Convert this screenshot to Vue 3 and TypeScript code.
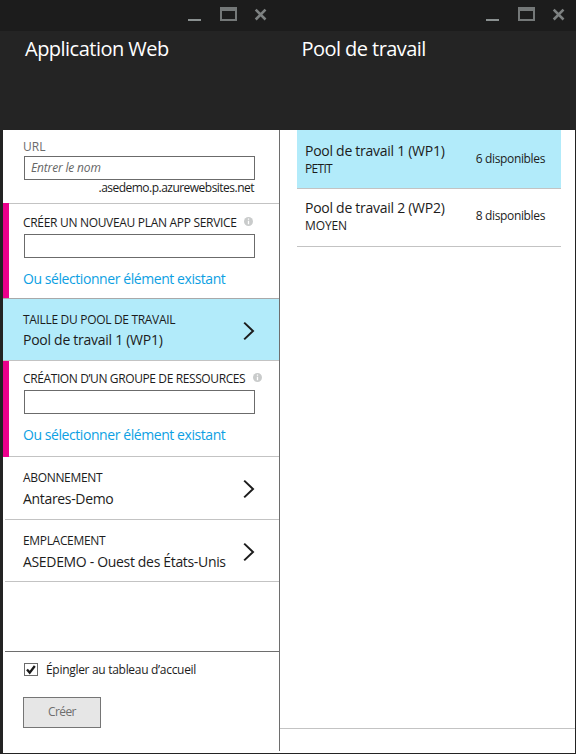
<script setup lang="ts">
import { ref } from 'vue'

interface Pool {
  id: number
  name: string
  size: string
  available: number
}

const pools: Pool[] = [
  { id: 1, name: 'Pool de travail 1 (WP1)', size: 'PETIT', available: 6 },
  { id: 2, name: 'Pool de travail 2 (WP2)', size: 'MOYEN', available: 8 },
]

const blades = [
  { id: 'app', title: 'Application Web' },
  { id: 'pool', title: 'Pool de travail' },
]

const selectedPool = ref(1)
const siteName = ref('')
const planName = ref('')
const groupName = ref('')
const pinned = ref(true)
</script>

<template>
  <div class="window">
    <header class="top">
      <div v-for="b in blades" :key="b.id" class="head" :class="b.id">
        <div class="controls">
          <svg width="79" height="15" viewBox="0 0 79 15">
            <rect x="0" y="12" width="13" height="2" fill="#8a9090" />
            <path d="M32 0h17v14H32zM34 4v8h13V4z" fill="#747878" fill-rule="evenodd" />
            <path d="M67.7 2.7l9.8 9.8M77.5 2.7l-9.8 9.8" stroke="#7d8181" stroke-width="2.6" fill="none" />
          </svg>
        </div>
        <h1>{{ b.title }}</h1>
      </div>
    </header>

    <div class="body">
      <main class="form">
        <section class="row url">
          <label class="cap">URL</label>
          <input v-model="siteName" class="field" type="text" placeholder="Entrer le nom" />
          <div class="suffix">.asedemo.p.azurewebsites.net</div>
        </section>

        <section class="row choice first">
          <label class="cap plan">
            <span>CRÉER UN NOUVEAU PLAN APP SERVICE</span>
            <svg class="info" width="9" height="9" viewBox="0 0 9 9">
              <circle cx="4.5" cy="4.5" r="4.5" fill="#c9cbcb" />
              <path d="M4.5 1.6v1.2M4.5 3.8v3.4" stroke="#fff" stroke-width="1.3" />
            </svg>
          </label>
          <input v-model="planName" class="field" type="text" />
          <a class="link">Ou sélectionner élément existant</a>
        </section>

        <section class="row nav active">
          <div>
            <div class="cap size">TAILLE DU POOL DE TRAVAIL</div>
            <div class="value wp">{{ pools[selectedPool - 1].name }}</div>
          </div>
          <svg class="chev" width="12" height="20" viewBox="0 0 12 20"><path d="M1.2 1.6L10 10l-8.8 8.4" /></svg>
        </section>

        <section class="row choice second">
          <label class="cap group">
            <span>CRÉATION D’UN GROUPE DE RESSOURCES</span>
            <svg class="info" width="9" height="9" viewBox="0 0 9 9">
              <circle cx="4.5" cy="4.5" r="4.5" fill="#c9cbcb" />
              <path d="M4.5 1.6v1.2M4.5 3.8v3.4" stroke="#fff" stroke-width="1.3" />
            </svg>
          </label>
          <input v-model="groupName" class="field" type="text" />
          <a class="link">Ou sélectionner élément existant</a>
        </section>

        <section class="row nav sub">
          <div>
            <div class="cap abo">ABONNEMENT</div>
            <div class="value">Antares-Demo</div>
          </div>
          <svg class="chev" width="12" height="20" viewBox="0 0 12 20"><path d="M1.2 1.6L10 10l-8.8 8.4" /></svg>
        </section>

        <section class="row nav loc">
          <div>
            <div class="cap abo">EMPLACEMENT</div>
            <div class="value">ASEDEMO - Ouest des États-Unis</div>
          </div>
          <svg class="chev" width="12" height="20" viewBox="0 0 12 20"><path d="M1.2 1.6L10 10l-8.8 8.4" /></svg>
        </section>

        <footer class="foot">
          <label class="pin">
            <input v-model="pinned" class="hidden" type="checkbox" />
            <span class="box">
              <svg v-if="pinned" width="12" height="11" viewBox="0 0 12 11">
                <path d="M2 5.6l2.7 3L9.8 2" fill="none" stroke="#1a1a1a" stroke-width="2.3" />
              </svg>
            </span>
            <span>Épingler au tableau d’accueil</span>
          </label>
          <button class="create" type="button">Créer</button>
        </footer>
      </main>

      <div class="divider"></div>

      <aside class="picker">
        <ul>
          <li
            v-for="p in pools"
            :key="p.id"
            :class="{ active: p.id === selectedPool }"
            @click="selectedPool = p.id"
          >
            <div>
              <div class="value wp">{{ p.name }}</div>
              <div class="tier" :class="p.size.toLowerCase()">{{ p.size }}</div>
            </div>
            <span class="count">{{ p.available }} disponibles</span>
          </li>
        </ul>
        <div class="bar"></div>
      </aside>
    </div>
  </div>
</template>

<style>
body {
  background: #232323;
}
</style>

<style scoped>
* {
  box-sizing: border-box;
}
.window {
  width: 576px;
  height: 754px;
  display: flex;
  flex-direction: column;
  background: #232323;
  color: #1c1c1c;
  font-family: 'Open Sans', 'Noto Sans', sans-serif;
  white-space: nowrap;
  overflow: hidden;
}
.top {
  display: grid;
  grid-template-columns: 278px 298px;
  height: 130px;
  background: #242424;
}
.controls {
  height: 31px;
  padding: 7px 11px 0 0;
  display: flex;
  justify-content: flex-end;
  background: #1c1c1c;
}
h1 {
  margin: 5px 0 0 25px;
  color: #fff;
  font-size: 20px;
  font-weight: 400;
  line-height: 26px;
  letter-spacing: -0.52px;
}
.pool h1 {
  margin-left: 23.5px;
  letter-spacing: -0.55px;
}
.body {
  display: flex;
  height: 623px;
  margin: 0 1px 0 3px;
  background: #fff;
}
.form {
  width: 276px;
  display: flex;
  flex-direction: column;
}
.divider {
  width: 1px;
  height: 621px;
  background: #6e6e6e;
}
.row {
  padding-left: 20px;
  border-bottom: 1px solid #c3c3c3;
}
.cap {
  display: block;
  font-size: 12px;
  line-height: 18px;
  letter-spacing: -0.32px;
}
.field {
  display: block;
  width: 231px;
  height: 24px;
  margin: 0 0 0 1px;
  padding: 0 6px 2px;
  border: 1px solid #6b6b6b;
  border-radius: 0;
  outline: none;
  background: #fff;
  font: 12px 'Open Sans', 'Noto Sans', sans-serif;
  letter-spacing: -0.17px;
}
.field::placeholder {
  color: #666;
  font-style: italic;
  opacity: 1;
}
.url {
  height: 73px;
  padding-top: 8px;
  border-bottom: 0;
}
.url .cap {
  color: #6b6b6b;
  letter-spacing: 0;
}
.suffix {
  width: 231px;
  text-align: right;
  font-size: 12px;
  line-height: 16px;
  letter-spacing: -0.52px;
}
.choice {
  display: flex;
  flex-direction: column;
  border-bottom: 0;
}
.first {
  height: 96px;
  padding-top: 9px;
  background:
    linear-gradient(#a9a9a9, #a9a9a9) bottom / 100% 1px no-repeat,
    linear-gradient(#ec008c, #ec008c) left / 6px 100% no-repeat,
    linear-gradient(#c3c3c3, #c3c3c3) top / 100% 1px no-repeat;
}
.second {
  height: 96px;
  padding-top: 7px;
  background:
    linear-gradient(#ec008c, #ec008c) left / 6px 100% no-repeat,
    linear-gradient(#c3c3c3, #c3c3c3) bottom / 100% 1px no-repeat;
}
.choice .cap {
  display: flex;
  align-items: center;
  height: 21px;
  margin-bottom: 1px;
}
.plan {
  gap: 7px;
  letter-spacing: -0.31px;
}
.group {
  gap: 8px;
  letter-spacing: -0.39px;
}
.info {
  margin-top: -2px;
}
.link {
  margin-top: 11px;
  color: #0d9fe3;
  font-size: 14px;
  line-height: 20px;
  letter-spacing: -0.43px;
}
.nav {
  display: flex;
  justify-content: space-between;
  align-items: center;
  padding-right: 24px;
}
.active {
  background: #b2ebfa;
}
.nav.active {
  height: 62px;
}
.value {
  font-size: 14px;
  line-height: 20px;
  letter-spacing: -0.33px;
}
.value.wp {
  letter-spacing: -0.27px;
}
.nav .cap {
  margin-top: 2px;
}
.nav .value {
  margin-top: 1px;
}
.sub .cap {
  margin-top: 1px;
}
.sub .value {
  margin-top: 2px;
}
.loc .value {
  margin-top: 2px;
}
.abo {
  letter-spacing: -0.33px;
}
.chev {
  margin-top: 2px;
}
.chev path {
  fill: none;
  stroke: #1c1c1c;
  stroke-width: 2;
}
.sub,
.loc {
  margin-left: 2px;
  padding-left: 18px;
}
.sub {
  height: 63px;
}
.loc {
  height: 62px;
}
.foot {
  margin: 69px 0 0 2px;
  padding: 8px 0 0 18px;
  border-top: 1px solid #6e6e6e;
}
.pin {
  display: flex;
  align-items: center;
  height: 18px;
  font-size: 12px;
  letter-spacing: -0.3px;
}
.hidden {
  display: none;
}
.box {
  width: 14px;
  height: 13px;
  margin: 0 8px 0 1px;
  display: flex;
  border: 1px solid #6b6b6b;
}
.create {
  display: block;
  width: 78px;
  height: 31px;
  margin-top: 19px;
  padding: 0 0 2px;
  border: 1px solid #757575;
  background: #e6e6e6;
  color: #6e6e6e;
  font: 12px 'Open Sans', 'Noto Sans', sans-serif;
  letter-spacing: -0.6px;
}
.picker {
  flex: 1;
  display: flex;
  flex-direction: column;
}
ul {
  width: 264px;
  margin: 0 0 0 17px;
  padding: 0;
  list-style: none;
}
li {
  display: flex;
  justify-content: space-between;
  align-items: center;
  height: 58px;
  padding: 0 16px 4px 8px;
  border-bottom: 1px solid #c3c3c3;
}
li.active {
  height: 59px;
  padding-bottom: 2px;
}
.tier {
  font-size: 12px;
  line-height: 15px;
}
.petit {
  letter-spacing: -0.7px;
}
.moyen {
  letter-spacing: -0.12px;
}
.count {
  font-size: 12px;
  letter-spacing: -0.35px;
}
.bar {
  height: 25px;
  margin-top: auto;
  border-top: 1px solid #c3c3c3;
}
</style>
